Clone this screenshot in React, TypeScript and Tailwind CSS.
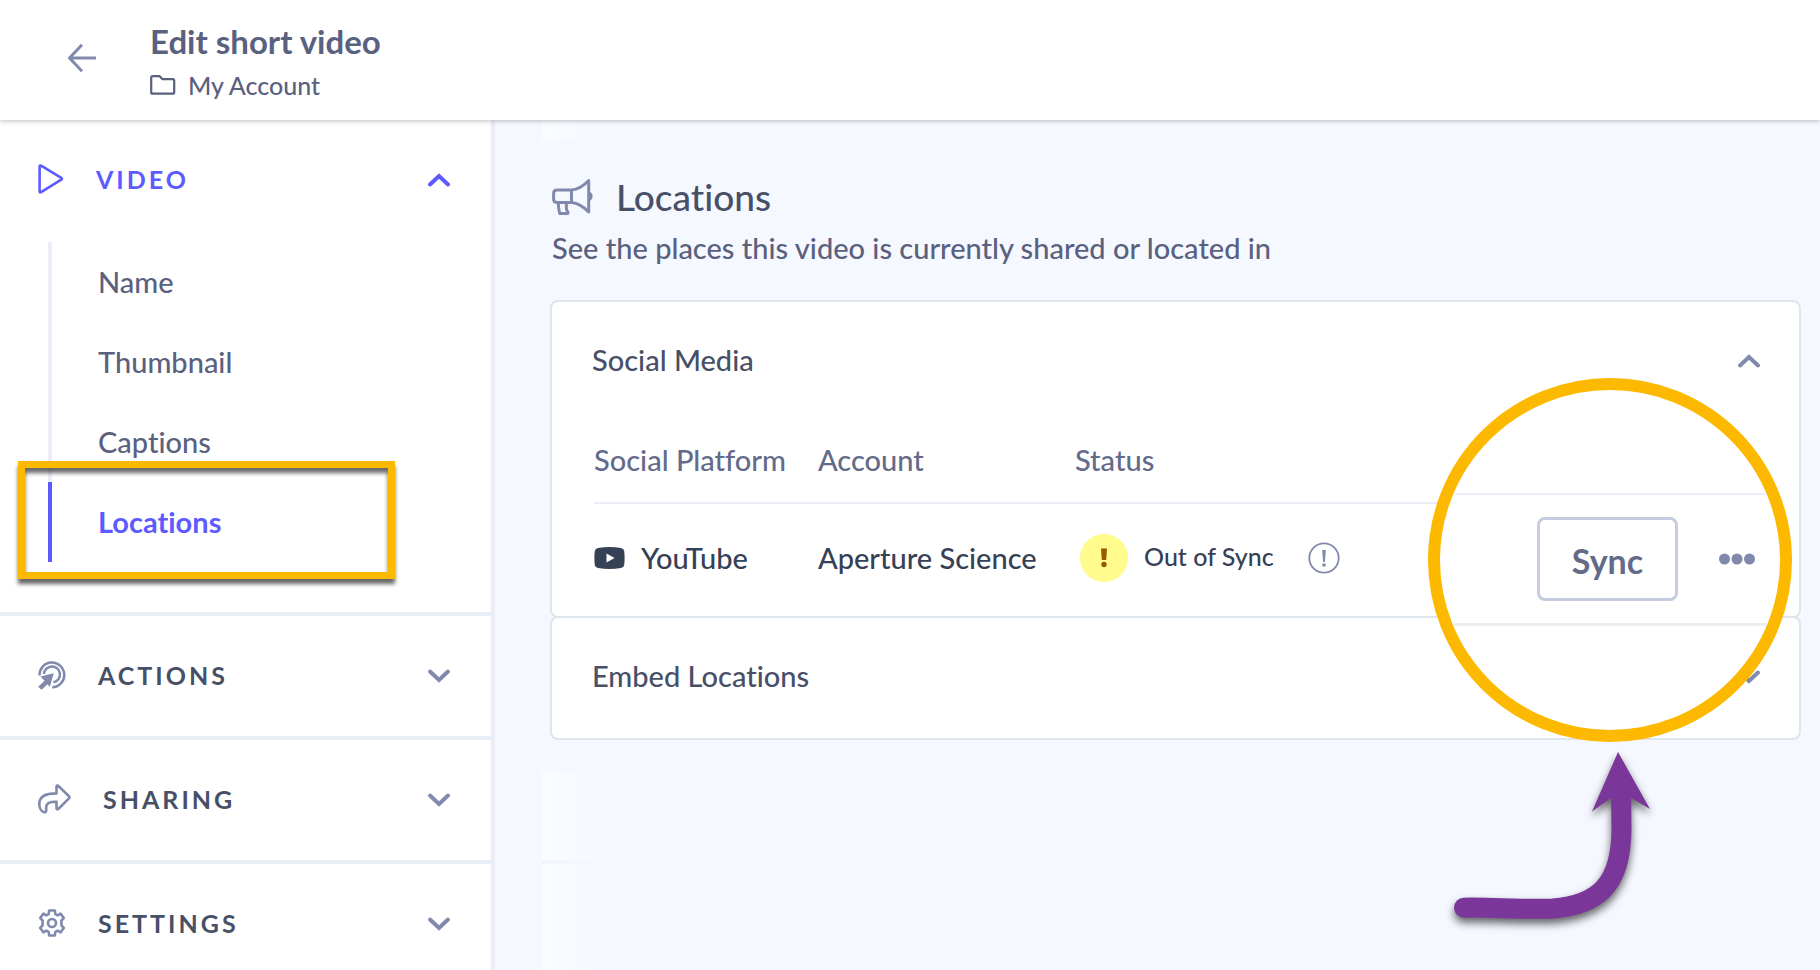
import type { ReactNode } from "react";

function ArrowLeftIcon() {
  return (
    <svg width="30" height="30" viewBox="0 0 30 30" fill="none" stroke="#8189ad" strokeWidth="3" strokeLinejoin="round">
      <path d="M29 15H2.500M15 1.800L2.500 15L15 28.200" />
    </svg>
  );
}

function FolderIcon() {
  return (
    <svg width="26" height="20" viewBox="0 0 26 20" fill="none" stroke="#5a617f" strokeWidth="2.200" strokeLinejoin="round">
      <path d="M1.200 3V17.200Q1.200 18.700 2.700 18.700H22.700Q24.200 18.700 24.200 17.200V5.700Q24.200 4.200 22.700 4.200H12.500L9.700 1.200H2.700Q1.200 1.200 1.200 3Z" />
    </svg>
  );
}

function PlayIcon() {
  return (
    <svg width="26" height="30" viewBox="0 0 26 30" fill="none" stroke="#5d5bff" strokeWidth="2.600" strokeLinejoin="round">
      <path d="M1.600 2.600Q1.600 0.900 3.100 1.700L23.300 13.900Q24.500 14.800 23.300 15.700L3.100 28.100Q1.600 28.900 1.600 27.200Z" />
    </svg>
  );
}

function ActionsIcon() {
  return (
    <svg width="28" height="30" viewBox="0 0 28 30" fill="none" stroke="#8189ad" strokeWidth="2.500">
      <path d="M1.500 15.500A12.400 12.400 0 1 1 14.200 27.300" />
      <path d="M6 14A8 8 0 1 1 15.500 22.300" />
      <path d="M2.500 16.500L15.800 13.200L11.800 27L9.500 24.200L3.500 29.800L0.200 26.800L6.500 20.800Z" fill="#8189ad" stroke="none" />
    </svg>
  );
}

function ShareIcon() {
  return (
    <svg width="33" height="30" viewBox="0 0 33 30" fill="none" stroke="#8189ad" strokeWidth="2.600" strokeLinejoin="round">
      <path d="M18.500 9.400V2.600Q18.900 0.900 20.300 1.900L31 12.300Q31.900 13.300 31 14.300L20.300 25Q19 26 18.500 24.300V17.700C12 17.500 8 19 8.200 23.500V26.500Q8 28.500 6.200 28.200C3 27.500 1.200 23.500 1.300 19.500C1.500 12.500 8.500 9.400 18.500 9.400Z" />
    </svg>
  );
}

function GearIcon() {
  return (
    <svg width="28" height="28" viewBox="0 0 28 28" fill="none" stroke="#8189ad" strokeWidth="2.600" strokeLinejoin="round">
      <path d="M11.200 1.500H16.800L17.400 5.200L19.600 6.300L22.600 4.700L25.800 9.100L23.400 11.500V16.500L25.800 18.900L22.600 23.300L19.600 21.700L17.400 22.800L16.800 26.500H11.200L10.600 22.800L8.400 21.700L5.400 23.300L2.200 18.900L4.600 16.500V11.500L2.200 9.100L5.400 4.700L8.400 6.300L10.600 5.200Z" />
      <circle cx="14" cy="14" r="4" />
    </svg>
  );
}

function MegaphoneIcon() {
  return (
    <svg width="42" height="38" viewBox="0 0 42 38" fill="none" stroke="#8189ad" strokeWidth="3" strokeLinejoin="round" strokeLinecap="round">
      <path d="M19.500 12H5Q1.600 12 1.600 15.400V21Q1.600 24.400 5 24.400H19.500ZM19.500 12C26 11.500 31 8.500 36.700 2.500V34C31 28 26 25 19.500 24.400" />
      <path d="M6.300 25C6.300 29 6.800 32 7.700 35.600H15.700C16.600 34.800 15.500 33 14.600 32C14.100 30 14.200 28 14.500 25" />
      <path d="M38 14.500C40.800 15.800 40.800 20.700 38 22Z" fill="#8189ad" strokeWidth="1.200" />
    </svg>
  );
}

function Chevron({ up = false, color = "#8189ad" }: { up?: boolean; color?: string }) {
  return (
    <svg width="24" height="16" viewBox="0 0 24 16" fill="none" stroke={color} strokeWidth="4" strokeLinecap="round" strokeLinejoin="miter">
      <path d={up ? "M3 13.500L12 5L21 13.500" : "M3 4.500L12 13L21 4.500"} />
    </svg>
  );
}

function YouTubeIcon() {
  return (
    <svg width="31" height="22" viewBox="0 0 31 22">
      <path d="M4 .9Q15.500-.9 27 .9Q29.800 1.300 30.200 4Q31 11 30.200 18Q29.800 20.700 27 21.100Q15.500 22.900 4 21.100Q1.200 20.700.8 18Q0 11 .8 4Q1.200 1.300 4 .9Z" fill="#364156" />
      <path d="M12.500 6.500L20.500 11L12.500 15.500Z" fill="#fff" />
    </svg>
  );
}

function SectionButton({ icon, label }: { icon: ReactNode; label: string }) {
  return (
    <button className="flex h-31 w-full items-center gap-8 border-b-4 border-[#eaeff7] pr-10 pb-0.5 pl-[38px] text-left">
      {icon}
      <span className="grow text-[25px] leading-8 font-bold tracking-[3px] text-[#475066]">{label}</span>
      <Chevron />
    </button>
  );
}

function Sidebar() {
  const links = ["Name", "Thumbnail", "Captions"];
  return (
    <aside className="w-[495px] shrink-0 border-r-4 border-[#eaeff7] bg-white">
      <div className="border-b-4 border-[#eaeff7] pb-[50px]">
        <button className="flex h-[122px] w-full items-center gap-8 pr-10 pb-1 pl-[38px] text-left text-[#5d5bff]">
          <PlayIcon />
          <span className="grow text-[25px] leading-8 font-bold tracking-[3px]">VIDEO</span>
          <Chevron up color="#5d5bff" />
        </button>
        <nav className="relative ml-12 flex flex-col">
          {links.map((label) => (
            <a key={label} href="#" className="flex h-20 items-center border-l-4 border-[#eaeff7] pl-[46px] text-[29px] font-medium text-[#5a617f]">
              {label}
            </a>
          ))}
          <a href="#" aria-current="page" className="flex h-20 items-center border-l-4 border-[#5d5bff] pl-[46px] text-[29px] font-bold text-[#5d5bff]">
            Locations
          </a>
          <span className="pointer-events-none absolute -bottom-[17px] -left-[30px] h-[118px] w-[377px] border-7 border-[#fcb900] shadow-[0_5px_4px_rgba(0,0,0,0.6),inset_0_5px_4px_rgba(0,0,0,0.6)]" />
        </nav>
      </div>
      <SectionButton icon={<ActionsIcon />} label="ACTIONS" />
      <SectionButton icon={<ShareIcon />} label="SHARING" />
      <SectionButton icon={<GearIcon />} label="SETTINGS" />
    </aside>
  );
}

function SocialTable() {
  return (
    <table className="w-full table-fixed border-collapse text-left text-[29px] leading-9 font-medium">
      <thead>
        <tr className="h-[83px] border-b-2 border-[#eaeff7] text-[#646b8a]">
          <th scope="col" className="w-[224px] pb-0.5 font-medium">Social Platform</th>
          <th scope="col" className="w-[257px] pb-0.5 font-medium">Account</th>
          <th scope="col" className="pb-0.5 font-medium">Status</th>
        </tr>
      </thead>
      <tbody>
        <tr className="h-[108px] text-[#364156]">
          <td>
            <span className="flex items-center gap-4">
              <YouTubeIcon />
              YouTube
            </span>
          </td>
          <td>Aperture Science</td>
          <td>
            <span className="flex items-center pl-[5px]">
              <span className="flex size-12 items-center justify-center rounded-full bg-[#fffb8c]">
                <svg width="8" height="20" viewBox="0 0 8 20" fill="#975a00">
                  <path d="M1 .5H7L6.200 12H1.800Z" />
                  <circle cx="4" cy="16.500" r="2.700" />
                </svg>
              </span>
              <span className="ml-4 pb-1 text-[25px]">Out of Sync</span>
              <svg className="ml-[34px]" width="32" height="32" viewBox="0 0 32 32" fill="none" stroke="#8189ad" strokeWidth="1.800">
                <circle cx="16" cy="16" r="14.700" />
                <path d="M14.200 8H17.800L16.900 20H15.100Z" fill="#8189ad" stroke="none" />
                <circle cx="16" cy="23" r="1.800" fill="#8189ad" stroke="none" />
              </svg>
            </span>
          </td>
        </tr>
      </tbody>
    </table>
  );
}

function Magnifier() {
  return (
    <div className="absolute top-[78px] right-[9px] z-10 size-[364px] overflow-hidden rounded-full border-12 border-[#fcb900] bg-white">
      <div className="mt-[103px] flex h-[133px] items-center justify-end border-t-2 border-b-3 border-t-[#eaeff7] border-b-[#edefef] pr-6">
        <button className="h-[84px] w-[141px] rounded-lg border-3 border-[#c6ccdf] pt-0.5 text-[34px] font-bold text-[#646b8a]">Sync</button>
        <button aria-label="More options" className="ml-10">
          <svg width="38" height="12" viewBox="0 0 38 12" fill="#8189ad">
            <circle cx="6.500" cy="6" r="5.500" />
            <circle cx="19" cy="6" r="5.500" />
            <circle cx="31.500" cy="6" r="5.500" />
          </svg>
        </button>
      </div>
    </div>
  );
}

function PointerArrow() {
  return (
    <svg className="pointer-events-none absolute top-[430px] right-[111px] z-10" width="260" height="220" viewBox="0 0 260 220">
      <g className="drop-shadow-[0_5px_4px_rgba(0,0,0,0.6)]">
        <path d="M34 177.700C60 177 95 180 123 178.500C168 175 191.500 155 191.500 98L191 60" fill="none" stroke="#7a3799" strokeWidth="20" strokeLinecap="round" />
        <path d="M188 22L162 81.500L181 68H201L220 79Z" fill="#7a3799" />
      </g>
    </svg>
  );
}

export default function App() {
  return (
    <div className="flex h-screen flex-col overflow-hidden bg-[#f5f8ff] font-['Lato','Open_Sans',sans-serif] [font-variant-ligatures:none]">
      <header className="relative z-20 flex h-30 shrink-0 items-center bg-white pl-[67px] shadow-[0_1px_5px_rgba(0,0,0,0.25)]">
        <button aria-label="Back" className="mr-[53px] pb-1">
          <ArrowLeftIcon />
        </button>
        <div className="pt-1">
          <h1 className="text-[33px] leading-11 font-bold text-[#5a617f]">Edit short video</h1>
          <p className="flex items-center gap-3 pt-0.5 text-[25px] leading-10 font-medium text-[#5a617f]">
            <FolderIcon />
            My Account
          </p>
        </div>
      </header>
      <div className="flex min-h-0 grow">
        <Sidebar />
        <main className="flex min-w-0 grow flex-col">
          <div className="ml-[47px] h-5 w-14 shrink-0 bg-linear-to-r from-[#fafcff] to-[#f5f8ff]" />
          <section className="pr-[19px] pl-[55px]">
            <h2 className="flex items-center gap-[22px] pt-[31px] pl-0.5 text-[37px] leading-[52px] font-medium text-[#475066]">
              <MegaphoneIcon />
              Locations
            </h2>
            <p className="pt-1 pl-0.5 text-[29px] leading-[42px] font-medium text-[#5a617f]">See the places this video is currently shared or located in</p>
            <div className="relative mt-[31px]">
              <article className="rounded-lg border-2 border-[#dfe5ec] bg-white pr-[38px] pb-[5px] pl-10">
                <button className="flex h-[118px] w-full items-center justify-between pb-0.5 text-left text-[29px] font-medium text-[#475066]">
                  Social Media
                  <Chevron up />
                </button>
                <div className="pl-0.5">
                  <SocialTable />
                </div>
              </article>
              <article className="-mt-0.5 rounded-lg border-2 border-[#dfe5ec] bg-white pr-[38px] pl-10">
                <button className="flex h-[120px] w-full items-center justify-between pb-1 text-left text-[29px] font-medium text-[#475066]">
                  Embed Locations
                  <Chevron />
                </button>
              </article>
              <Magnifier />
              <PointerArrow />
            </div>
          </section>
          <div className="mt-8 ml-[47px] flex w-14 grow flex-col">
            <div className="h-22 shrink-0 bg-linear-to-r from-[#fafcff] to-[#f5f8ff]" />
            <div className="h-1 shrink-0 bg-linear-to-r from-[#f1f4fa] to-[#f5f8ff]" />
            <div className="grow bg-linear-to-r from-[#fafcff] to-[#f5f8ff]" />
          </div>
        </main>
      </div>
    </div>
  );
}
